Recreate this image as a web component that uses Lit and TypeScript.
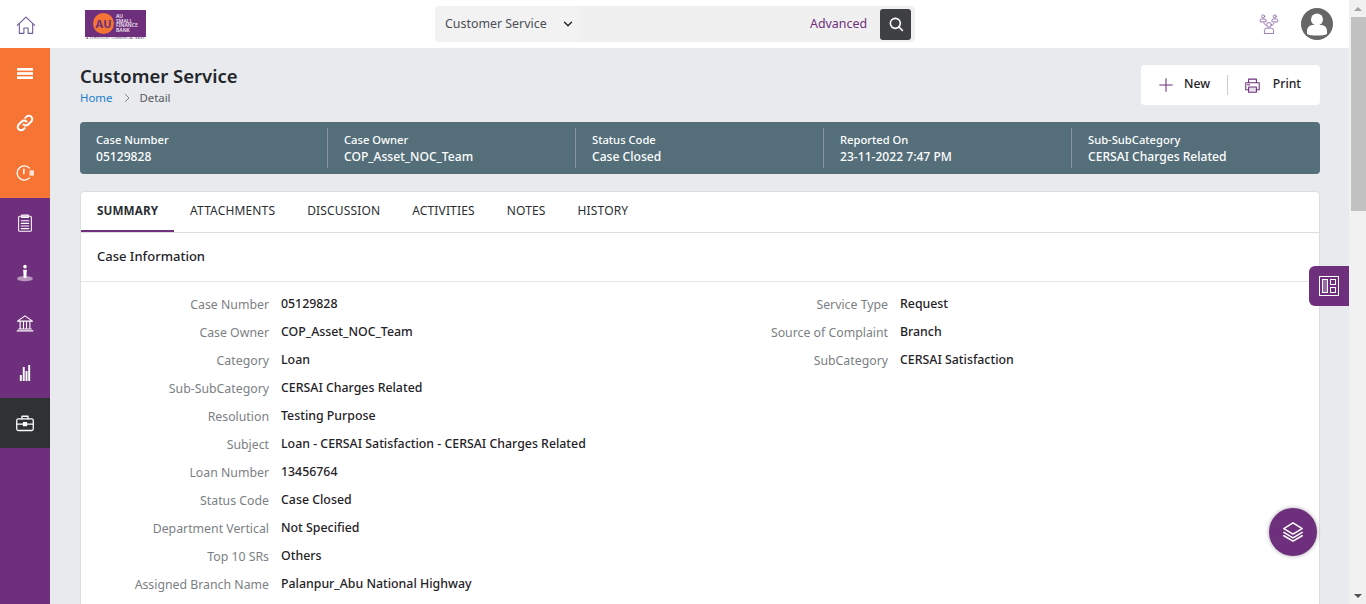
import { LitElement, html, css, svg } from "lit";
import { customElement } from "lit/decorators.js";

const stroke = (body: unknown, size = 20, width = 1.6) => html`<svg
  width=${size}
  height=${size}
  viewBox="0 0 24 24"
  fill="none"
  stroke="currentColor"
  stroke-width=${width}
  stroke-linecap="round"
  stroke-linejoin="round"
>
  ${body}
</svg>`;

const ICONS = {
  home: svg`<path d="M1.500 12.500 12 2.500l10.500 10"/><path d="M4 10.500V22h5.500v-6.500h5V22H20V10.500"/>`,
  link: svg`<path d="M10 14a4.500 4.500 0 0 0 6.400 0l4-4a4.500 4.500 0 0 0-6.400-6.400l-1.600 1.600"/><path d="M14 10a4.500 4.500 0 0 0-6.400 0l-4 4a4.500 4.500 0 0 0 6.400 6.400l1.600-1.600"/>`,
  clock: svg`<path d="M18 5.500A9.500 9.500 0 1 0 18 18.500"/><path d="M10.500 7v5.500" stroke-width="2"/><rect x="18" y="8.500" width="6" height="7" fill="currentColor" stroke="none" opacity=".8"/>`,
  clipboard: svg`<rect x="3.500" y="3" width="17" height="20" rx="1.500"/><path d="M7.500 1.500h9v3h-9zM7 9h10M7 12.500h10M7 16h10M7 19.500h10"/>`,
  person: svg`<circle cx="12" cy="3.500" r="2.400" fill="currentColor" stroke="none"/><path d="M9.500 7.500h5l-.8 11h-3.400z" fill="currentColor" stroke="none"/><ellipse cx="12" cy="19.500" rx="10.500" ry="3.500" fill="currentColor" stroke="none" opacity=".5"/>`,
  bank: svg`<path d="M2 9.500 12 2.500l10 7zM1.500 22.500h21M3.500 20h17M5.500 10.500V20M10 10.500V20M14 10.500V20M18.500 10.500V20"/>`,
  chart: svg`<path d="M7 21.600v-7.200M10.500 21.600V4.800M13.800 21.600V9.600M17 21.600V2.400" stroke-width="2.300" stroke-linecap="butt"/>`,
  case: svg`<rect x="1" y="6.500" width="22" height="15.500" rx="2"/><path d="M8 6.500V3h8v3.500M1 13.500h22"/><rect x="10" y="11.500" width="4" height="4" fill="currentColor"/>`,
  chevron: svg`<path d="m6 9 6 6 6-6"/>`,
  chevronRight: svg`<path d="m9 5 7 7-7 7"/>`,
  search: svg`<circle cx="11" cy="11" r="7.500"/><path d="m16.500 16.500 5 5"/>`,
  team: svg`<circle cx="12" cy="13" r="2.800"/><path d="M6.500 23v-3a3 3 0 0 1 3-3h5a3 3 0 0 1 3 3v3zM5.500 10.500l3 3.500M18.500 10.500l-3 3.500"/><circle cx="5" cy="2.800" r="1.800"/><circle cx="19" cy="2.800" r="1.800"/><path d="M1.500 9V7.500A1.500 1.500 0 0 1 3 6h4a1.500 1.500 0 0 1 1.500 1.500V9zM15.500 9V7.500A1.500 1.500 0 0 1 17 6h4a1.500 1.500 0 0 1 1.500 1.500V9z"/>`,
  plus: svg`<path d="M12 2v20M2 12h20" stroke-linecap="butt"/>`,
  print: svg`<path d="M6.500 8V3h11v5M6.500 18H2.500V8h19v10h-4"/><rect x="6.500" y="14" width="11" height="7.500" fill="currentColor" fill-opacity=".15"/><path d="M5 11h3"/>`,
  layers: svg`<path d="M12 1 23 8l-11 6.500L1 8z"/><path d="m1 12.500 11 6.500 11-6.500"/><path d="m1 16.500 11 6.500 11-6.500"/>`,
};

const NAV = [
  { icon: ICONS.clock, tone: "orange", size: 18, width: 1.8 },
  { icon: ICONS.clipboard, tone: "", size: 18, width: 1.4 },
  { icon: ICONS.person, tone: "", size: 18, width: 1.4 },
  { icon: ICONS.bank, tone: "", size: 18, width: 1.5 },
  { icon: ICONS.chart, tone: "", size: 20, width: 1.4 },
  { icon: ICONS.case, tone: "active", size: 18, width: 1.7 },
];

const STRIP = [
  ["Case Number", "05129828"],
  ["Case Owner", "COP_Asset_NOC_Team"],
  ["Status Code", "Case Closed"],
  ["Reported On", "23-11-2022 7:47 PM"],
  ["Sub-SubCategory", "CERSAI Charges Related"],
];

const TABS = ["SUMMARY", "ATTACHMENTS", "DISCUSSION", "ACTIVITIES", "NOTES", "HISTORY"];

const LEFT_FIELDS = [
  ["Case Number", "05129828"],
  ["Case Owner", "COP_Asset_NOC_Team"],
  ["Category", "Loan"],
  ["Sub-SubCategory", "CERSAI Charges Related"],
  ["Resolution", "Testing Purpose"],
  ["Subject", "Loan - CERSAI Satisfaction - CERSAI Charges Related"],
  ["Loan Number", "13456764"],
  ["Status Code", "Case Closed"],
  ["Department Vertical", "Not Specified"],
  ["Top 10 SRs", "Others"],
  ["Assigned Branch Name", "Palanpur_Abu National Highway"],
];

const RIGHT_FIELDS = [
  ["Service Type", "Request"],
  ["Source of Complaint", "Branch"],
  ["SubCategory", "CERSAI Satisfaction"],
];

@customElement("app-root")
export class AppRoot extends LitElement {
  static styles = css`
    :host {
      display: flex;
      height: 604px;
      overflow: hidden;
      position: relative;
      font-family: "Noto Sans", "Open Sans", sans-serif;
      font-size: 12.4px;
      color: #1f2328;
      background: #e9eaee;
    }

    /* Page column */
    .page {
      flex: 1;
      min-width: 0;
      display: flex;
      flex-direction: column;
    }

    /* Top bar */
    .topbar {
      flex: 0 0 48px;
      display: grid;
      grid-template-columns: 50px 385px 480px 1fr;
      align-items: center;
      background: #fff;
    }
    .home {
      display: flex;
      justify-content: center;
      color: #6d5a96;
      margin: 1px 0 0 1px;
    }
    .logo-cell {
      padding-left: 35px;
    }
    .logo {
      width: 61px;
      height: 30px;
      display: flex;
      flex-direction: column;
      margin-top: 1px;
    }
    .logo-mark {
      flex: 1;
      display: flex;
      align-items: center;
      gap: 2px;
      padding-left: 8px;
      background: #6e2f7c;
      color: #f0e6f2;
      font-size: 5px;
      line-height: 4.500px;
      font-weight: 600;
    }
    .logo-circle {
      width: 21px;
      height: 21px;
      border-radius: 50%;
      background: #f37435;
      color: #6e2f7c;
      font-size: 11px;
      line-height: 21px;
      font-weight: 700;
      text-align: center;
      flex: none;
    }
    .logo-tag {
      font-size: 3px;
      line-height: 3px;
      height: 3px;
      white-space: nowrap;
      color: #55405f;
      overflow: hidden;
      text-align: center;
      letter-spacing: 0.35px;
    }
    .search {
      height: 36px;
      background: #f0f0f0;
      border-radius: 4px;
      display: flex;
      align-items: center;
      padding-right: 4px;
    }
    .scope {
      width: 146px;
      height: 34px;
      box-sizing: border-box;
      padding: 0 6px 2px 10px;
      display: flex;
      align-items: center;
      justify-content: space-between;
      color: #4a4f55;
      background: #f2f2f2;
      border-radius: 4px;
    }
    .scope svg {
      color: #222;
      margin-top: 2px;
    }
    .advanced {
      margin-left: auto;
      margin-right: 13px;
      margin-top: -2px;
      color: #6e2f7c;
    }
    .go {
      width: 31px;
      height: 31px;
      background: #3f4044;
      border-radius: 3px;
      color: #fff;
      display: flex;
      align-items: center;
      justify-content: center;
    }
    .top-right {
      display: flex;
      justify-content: flex-end;
      align-items: center;
      gap: 22px;
      padding-right: 16px;
      color: #8a62a3;
    }
    .avatar {
      width: 32px;
      height: 32px;
      display: block;
    }

    .below {
      flex: 1;
      min-height: 0;
      display: flex;
    }

    /* Side navigation */
    .side {
      flex: 0 0 50px;
      background: #6e2f7c;
      display: flex;
      flex-direction: column;
    }
    .side-item {
      flex: 0 0 50px;
      display: flex;
      align-items: center;
      justify-content: center;
      color: #fff;
    }
    .side-item.orange {
      background: #f77534;
    }
    .side-item.active {
      background: #2f3134;
    }

    /* Main */
    .main {
      flex: 1;
      min-width: 0;
      padding: 17px 29px 0 30px;
    }
    .head {
      height: 57px;
      display: flex;
      justify-content: space-between;
      align-items: flex-start;
    }
    h1 {
      margin: -1px 0 0;
      font-size: 18.500px;
      line-height: 24px;
      font-weight: 600;
      color: #22262b;
    }
    .crumbs {
      display: flex;
      align-items: center;
      gap: 6px;
      font-size: 11.400px;
      line-height: 18px;
      margin-top: 1px;
      color: #55595e;
    }
    .crumbs a {
      color: #1b7fcc;
      margin-right: 3px;
    }
    .crumbs svg {
      color: #666;
    }
    .actions {
      width: 179px;
      height: 40px;
      box-sizing: border-box;
      background: #fff;
      border-radius: 4px;
      display: flex;
      align-items: center;
      padding: 0 19px 3px 17px;
      font-size: 12.200px;
      font-weight: 500;
    }
    .action {
      display: flex;
      align-items: center;
      color: #6e2f7c;
    }
    .action span {
      color: #1f2328;
    }
    .action.new {
      gap: 10px;
    }
    .action.print {
      gap: 12px;
      margin-left: auto;
    }
    .action svg {
      margin-top: 3px;
    }
    .rule {
      width: 1px;
      height: 20px;
      margin: 3px 0 0 17px;
      background: #cfc9d3;
    }

    .strip {
      height: 52px;
      background: #546e7a;
      border-radius: 4px;
      color: #fff;
      display: grid;
      grid-template-columns: repeat(5, 1fr);
      align-items: center;
      font-weight: 500;
    }
    .strip-cell {
      height: 40px;
      box-sizing: border-box;
      padding: 3px 16px 0;
      border-right: 1px solid #8297a1;
      line-height: 17px;
      white-space: nowrap;
    }
    .strip-cell:last-child {
      border-right: 0;
    }
    .strip-key {
      font-size: 11.200px;
    }
    .strip-value {
      font-size: 12.100px;
    }

    .card {
      margin-top: 17px;
      height: 500px;
      box-sizing: border-box;
      background: #fff;
      border: 1px solid #dcdde1;
      border-radius: 4px;
    }
    .tabs {
      height: 40px;
      display: flex;
      border-bottom: 1px solid #dcdde1;
    }
    .tab {
      padding: 0 16px;
      line-height: 37px;
      height: 40px;
      box-sizing: border-box;
      font-size: 12px;
      color: #2a2e33;
      letter-spacing: 0.15px;
    }
    .tab.on {
      font-weight: 700;
      font-size: 11.700px;
      letter-spacing: 0.1px;
      border-bottom: 2px solid #6e2f7c;
    }
    .section {
      height: 49px;
      box-sizing: border-box;
      padding-left: 16px;
      line-height: 46px;
      font-size: 13px;
      font-weight: 500;
      border-bottom: 1px solid #e6e7ea;
    }
    .fields {
      display: grid;
      grid-template-columns: 619px 1fr;
      padding-top: 9px;
    }
    .row {
      display: grid;
      grid-template-columns: 188px 1fr;
      column-gap: 12px;
      height: 28px;
      line-height: 28px;
    }
    .row label {
      text-align: right;
      font-size: 12.300px;
      color: #7b7f85;
      white-space: nowrap;
    }
    .row span {
      color: #1f2328;
      font-size: 12.350px;
      font-weight: 500;
      white-space: nowrap;
      margin-top: -1px;
    }

    /* Scrollbar */
    .scrollbar {
      flex: 0 0 17px;
      background: #f1f1f1;
      display: flex;
      flex-direction: column;
      align-items: center;
    }
    .arrow-up,
    .arrow-down {
      width: 0;
      height: 0;
      border-left: 4px solid transparent;
      border-right: 4px solid transparent;
    }
    .arrow-up {
      margin-top: 7px;
      border-bottom: 4px solid #a3a3a3;
    }
    .arrow-down {
      margin-bottom: 6px;
      border-top: 4px solid #505050;
    }
    .thumb {
      width: 15px;
      height: 194px;
      margin-top: 6px;
      align-self: flex-end;
      background: #c1c1c1;
    }
    .spacer {
      flex: 1;
    }

    /* Overlays */
    .panel-btn {
      position: absolute;
      left: 1309px;
      top: 266px;
      width: 40px;
      height: 40px;
      background: #6e2f7c;
      border-radius: 6px 0 0 6px;
      color: #fff;
      display: flex;
      align-items: center;
      justify-content: center;
    }
    .fab {
      position: absolute;
      left: 1269px;
      top: 508px;
      width: 48px;
      height: 48px;
      border-radius: 50%;
      background: #6e2f7c;
      box-shadow: 0 0 4px rgba(0, 0, 0, 0.35);
      color: #fff;
      display: flex;
      align-items: center;
      justify-content: center;
    }
  `;

  private fieldColumn(rows: string[][]) {
    return html`<div>
      ${rows.map(
        ([label, value]) => html`<div class="row">
          <label>${label}</label><span>${value}</span>
        </div>`
      )}
    </div>`;
  }

  render() {
    return html`
      <div class="page">
        <header class="topbar">
          <div class="home">${stroke(ICONS.home, 20, 1.3)}</div>
          <div class="logo-cell">
            <div class="logo">
              <div class="logo-mark">
                <div class="logo-circle">AU</div>
                <div>AU<br />SMALL<br />FINANCE<br />BANK</div>
              </div>
              <div class="logo-tag">A SCHEDULED COMMERCIAL BANK</div>
            </div>
          </div>
          <div class="search">
            <div class="scope">Customer Service ${stroke(ICONS.chevron, 14, 2.4)}</div>
            <div class="advanced">Advanced</div>
            <div class="go">${stroke(ICONS.search, 16, 2.4)}</div>
          </div>
          <div class="top-right">
            ${stroke(ICONS.team, 20, 1)}
            <svg class="avatar" viewBox="0 0 32 32">
              <circle cx="16" cy="16" r="16" fill="#666" />
              <circle cx="16" cy="11.500" r="6" fill="#fff" />
              <path d="M6 26v-3c0-4 3-6 6-6h8c3 0 6 2 6 6v3c-3 2-17 2-20 0z" fill="#fff" />
            </svg>
          </div>
        </header>
        <div class="below">
          <nav class="side">
            <div class="side-item orange">
              <svg width="16" height="11" viewBox="0 0 16 11" fill="#fff">
                <rect y="0" width="16" height="2.600" /><rect y="4.200" width="16" height="2.600" /><rect
                  y="8.400"
                  width="16"
                  height="2.600"
                />
              </svg>
            </div>
            <div class="side-item orange">${stroke(ICONS.link, 18, 2.6)}</div>
            ${NAV.map(
              (n) => html`<div class="side-item ${n.tone}">${stroke(n.icon, n.size, n.width)}</div>`
            )}
          </nav>
          <main class="main">
            <div class="head">
              <div>
                <h1>Customer Service</h1>
                <div class="crumbs">
                  <a>Home</a>
                  ${stroke(ICONS.chevronRight, 12, 1.6)}
                  <span>Detail</span>
                </div>
              </div>
              <div class="actions">
                <div class="action new">${stroke(ICONS.plus, 16)}<span>New</span></div>
                <div class="rule"></div>
                <div class="action print">${stroke(ICONS.print, 17, 1.5)}<span>Print</span></div>
              </div>
            </div>
            <section class="strip">
              ${STRIP.map(
                ([k, v]) => html`<div class="strip-cell">
                  <div class="strip-key">${k}</div>
                  <div class="strip-value">${v}</div>
                </div>`
              )}
            </section>
            <section class="card">
              <div class="tabs">
                ${TABS.map((t, i) => html`<div class="tab ${i === 0 ? "on" : ""}">${t}</div>`)}
              </div>
              <div class="section">Case Information</div>
              <div class="fields">
                ${this.fieldColumn(LEFT_FIELDS)} ${this.fieldColumn(RIGHT_FIELDS)}
              </div>
            </section>
          </main>
        </div>
      </div>
      <div class="scrollbar">
        <div class="arrow-up"></div>
        <div class="thumb"></div>
        <div class="spacer"></div>
        <div class="arrow-down"></div>
      </div>
      <div class="panel-btn">
        <svg width="20" height="20" viewBox="0 0 20 20" fill="none" stroke="currentColor">
          <rect x="0.500" y="0.500" width="19" height="19" />
          <rect x="3.500" y="3.500" width="5" height="13" fill="#fff" fill-opacity=".3" />
          <rect x="11.500" y="3.500" width="5" height="5" />
          <rect x="11.500" y="11.500" width="5" height="5" />
        </svg>
      </div>
      <div class="fab">${stroke(ICONS.layers, 20, 1.8)}</div>
    `;
  }
}
